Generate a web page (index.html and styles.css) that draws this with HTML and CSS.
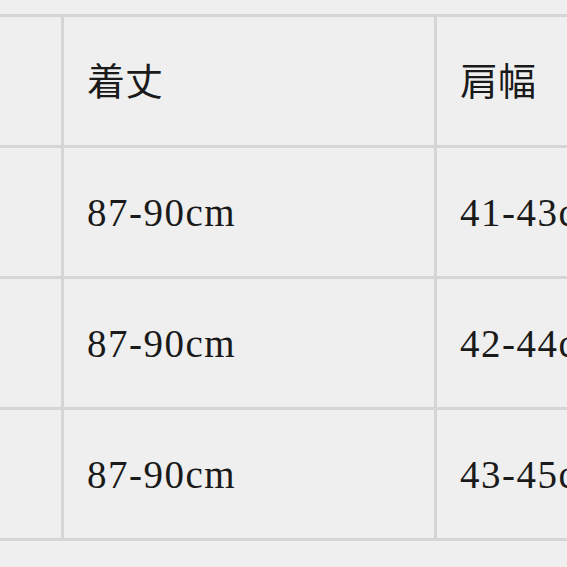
FILE: index.html
```html
<!DOCTYPE html>
<html lang="ja">
<head>
<meta charset="utf-8">
<link rel="stylesheet" href="styles.css">
</head>
<body>
<div class="sheet">
  <div class="cell"></div>
  <div class="cell cjk">着丈</div>
  <div class="cell cjk">肩幅</div>
  <div class="cell"></div>
  <div class="cell num">87-90cm</div>
  <div class="cell num">41-43cm</div>
  <div class="cell"></div>
  <div class="cell num">87-90cm</div>
  <div class="cell num">42-44cm</div>
  <div class="cell"></div>
  <div class="cell num">87-90cm</div>
  <div class="cell num">43-45cm</div>
</div>
</body>
</html>
```
FILE: styles.css
```css
html, body {
  margin: 0;
  padding: 0;
  background: #efefef;
  overflow: hidden;
  width: 567px;
  height: 567px;
}
.sheet {
  display: grid;
  grid-template-columns: 100px 370px 200px;
  grid-auto-rows: 128px;
  gap: 3px;
  padding: 3px;
  background: #d5d5d5;
  margin-top: 14px;
  margin-left: -42px;
  width: max-content;
}
.cell {
  background: #efefef;
  display: flex;
  align-items: center;
  padding-left: 23px;
  white-space: nowrap;
  color: #1a1a1a;
  overflow: hidden;
}
.cjk {
  font-family: "Noto Sans CJK JP", sans-serif;
  font-size: 38px;
  letter-spacing: 0px;
  font-weight: 400;
  padding-bottom: 6px;
}
.num {
  font-family: "Liberation Serif", serif;
  font-size: 39px;
  letter-spacing: 1.5px;
}
```
